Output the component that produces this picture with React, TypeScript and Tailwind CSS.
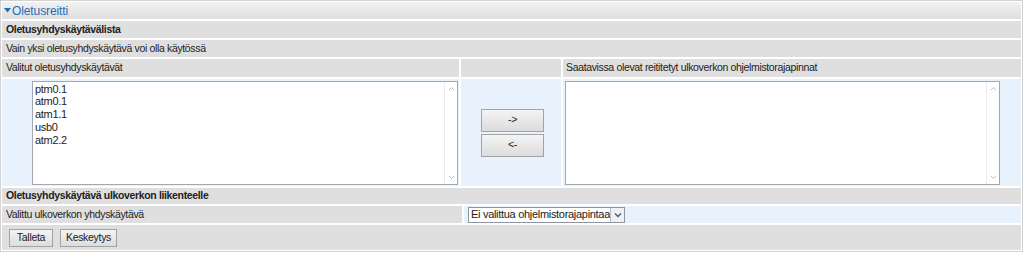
import React from "react";

const font = { fontFamily: '"Liberation Sans", Arial, sans-serif' };

const ListBox = ({ items, className }: { items: string[]; className: string }) => (
  <div className={`flex border border-[#a2a8b0] bg-white ${className}`}>
    <div className="flex-1 pl-[2px] pt-[1px] text-[11px] leading-[12.8px] tracking-[-0.3px] text-[#222]">
      {items.map((it) => (
        <div key={it}>{it}</div>
      ))}
    </div>
    <div className="flex w-[13px] flex-col items-center justify-between border-l border-[#ececec] py-[4px] text-[#b8bec6]">
      <svg width="7" height="5" viewBox="0 0 7 5">
        <path d="M1 4 L3.5 1.5 L6 4" stroke="currentColor" fill="none" strokeWidth="1" />
      </svg>
      <svg width="7" height="5" viewBox="0 0 7 5">
        <path d="M1 1 L3.5 3.5 L6 1" stroke="currentColor" fill="none" strokeWidth="1" />
      </svg>
    </div>
  </div>
);

const Btn = ({ label, className }: { label: string; className: string }) => (
  <div
    className={`flex items-center justify-center border border-[#a3a3a3] bg-gradient-to-b from-[#f4f4f4] to-[#dcdcdc] text-[10.5px] tracking-[-0.3px] text-[#222] ${className}`}
  >
    {label}
  </div>
);

export default function App() {
  return (
    <div style={font} className="h-[253px] w-[1024px] bg-white">
      <div className="flex h-[252px] w-[1023px] flex-col gap-[2px] border border-[#d2d2d2] p-[1px] text-[10.5px] tracking-[-0.35px] text-[#222]">
        <div className="flex h-[17px] items-center bg-gradient-to-b from-[#f2f2f2] to-[#dedede] pl-[2px] text-[12px] tracking-[-0.1px] text-[#1f6fb4]">
          <svg width="7" height="5" viewBox="0 0 7 5" className="mr-[1px]">
            <path d="M0 0 H7 L3.5 4.5 Z" fill="currentColor" />
          </svg>
          Oletusreitti
        </div>
        <div className="flex h-[17px] items-center bg-[#dfdfdf] pl-[4px] font-bold">
          Oletusyhdyskäytävälista
        </div>
        <div className="flex h-[17px] items-center bg-[#dfdfdf] pl-[4px]">
          Vain yksi oletusyhdyskäytävä voi olla käytössä
        </div>
        <div className="flex h-[18px] gap-[2px]">
          <div className="flex w-[457px] items-center bg-[#dfdfdf] pl-[4px]">Valitut oletusyhdyskäytävät</div>
          <div className="w-[100px] bg-[#dfdfdf]" />
          <div className="flex flex-1 items-center bg-[#dfdfdf] pl-[3px]">
            Saatavissa olevat reititetyt ulkoverkon ohjelmistorajapinnat
          </div>
        </div>
        <div className="flex h-[108px] gap-[2px]">
          <div className="flex w-[457px] items-center bg-[#e8f2fd] pl-[30px]">
            <ListBox items={["ptm0.1", "atm0.1", "atm1.1", "usb0", "atm2.2"]} className="h-[104px] w-[426px]" />
          </div>
          <div className="flex w-[100px] flex-col items-center justify-center gap-[2px] bg-[#e8f2fd] pl-[3px]">
            <Btn label="->" className="h-[23px] w-[63px]" />
            <Btn label="<-" className="h-[23px] w-[63px]" />
          </div>
          <div className="flex flex-1 items-center bg-[#e8f2fd] pl-[2px]">
            <ListBox items={[]} className="h-[104px] w-[435px]" />
          </div>
        </div>
        <div className="flex h-[16px] items-center bg-[#dfdfdf] pl-[4px] font-bold">
          Oletusyhdyskäytävä ulkoverkon liikenteelle
        </div>
        <div className="flex h-[17px] gap-[2px]">
          <div className="flex w-[460px] items-center bg-[#dfdfdf] pl-[4px]">Valittu ulkoverkon yhdyskäytävä</div>
          <div className="flex flex-1 items-center bg-[#e8f2fd] pl-[4px]">
            <div className="flex h-[16px] w-[157px] items-center border border-[#8e959e] bg-white">
              <span className="flex-1 whitespace-nowrap pl-[2px] text-[11px] tracking-[-0.3px]">Ei valittua ohjelmistorajapintaa</span>
              <span className="flex h-[14px] w-[14px] items-center justify-center border-l border-[#b9bec4] bg-[#eef0f3] text-[#4a5a70]">
                <svg width="8" height="6" viewBox="0 0 8 6">
                  <path d="M1 1.5 L4 4.5 L7 1.5" stroke="currentColor" fill="none" strokeWidth="1.4" />
                </svg>
              </span>
            </div>
          </div>
        </div>
        <div className="flex h-[25px] items-center gap-[7px] bg-[#dfdfdf] pl-[7px]">
          <Btn label="Talleta" className="h-[18px] w-[44px]" />
          <Btn label="Keskeytys" className="h-[18px] w-[57px]" />
        </div>
      </div>
    </div>
  );
}
